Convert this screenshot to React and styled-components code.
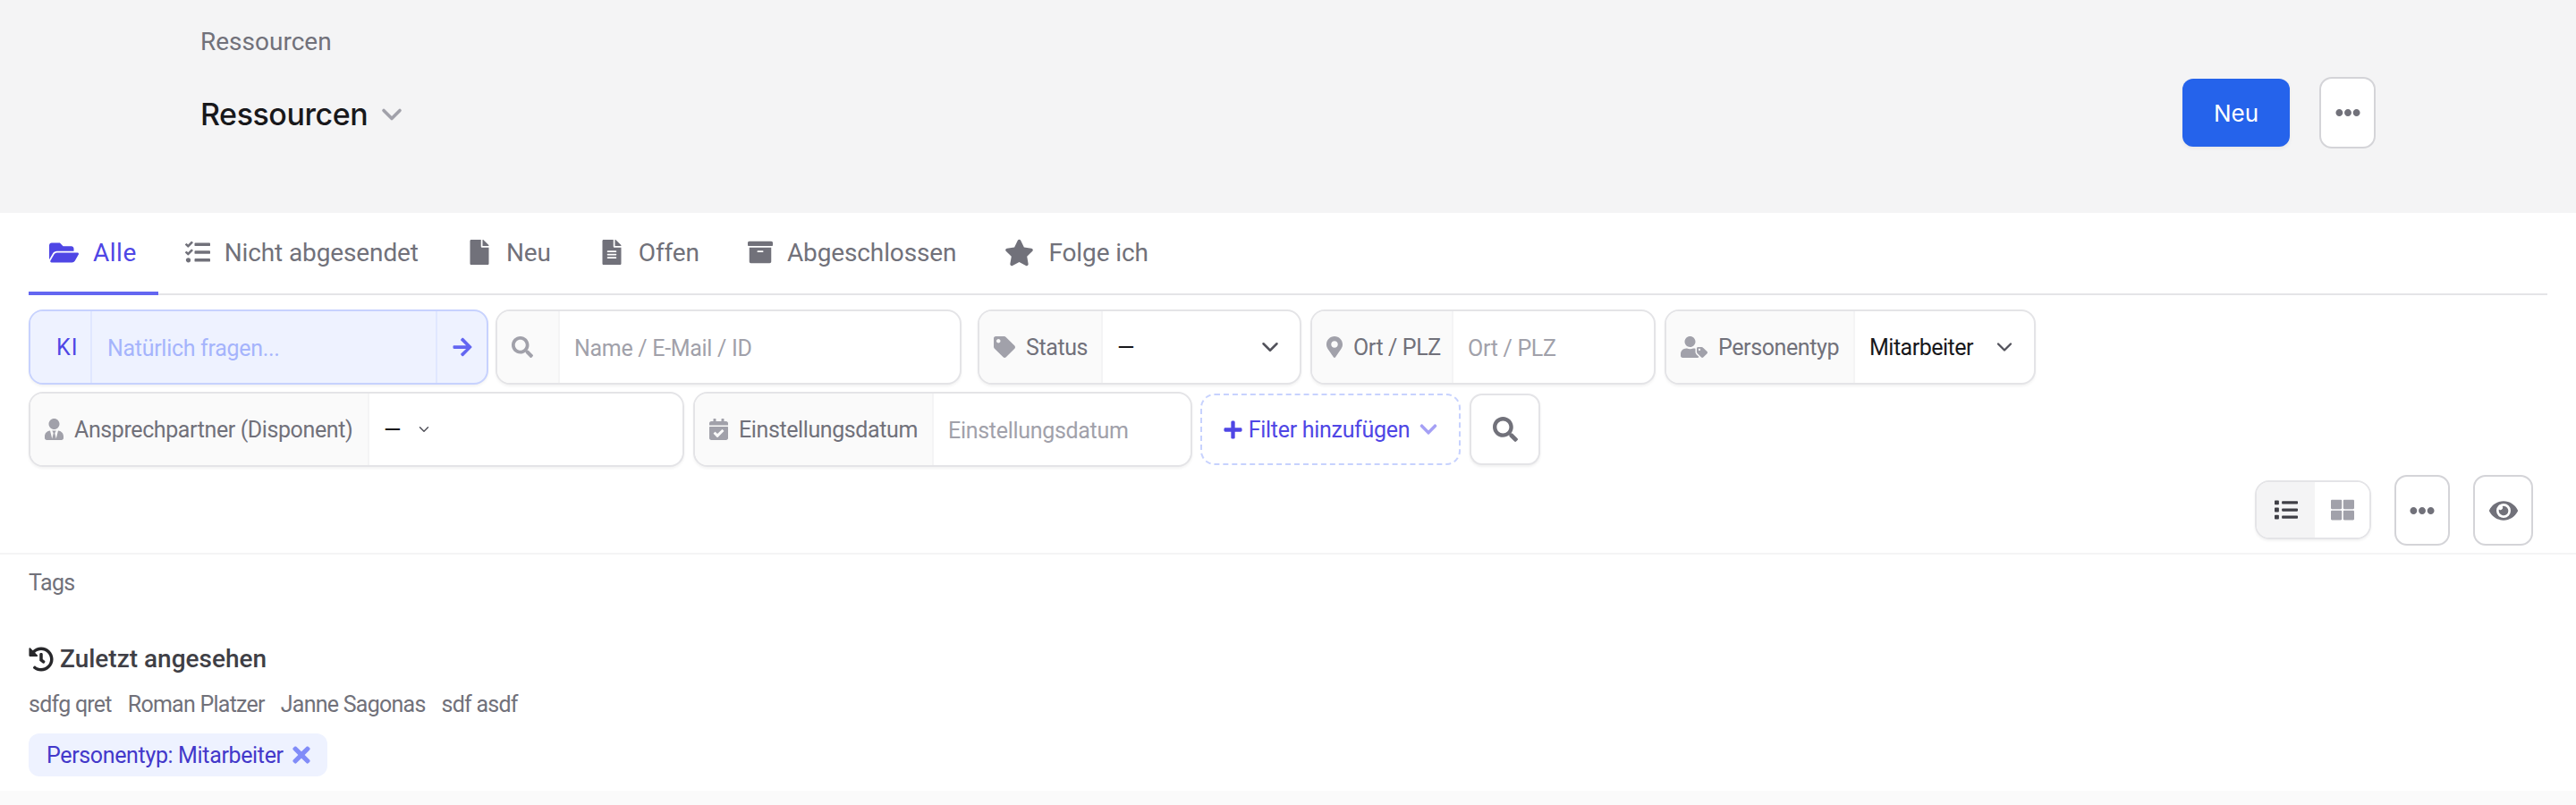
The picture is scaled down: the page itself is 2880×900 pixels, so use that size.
import styled, { createGlobalStyle } from "styled-components";
import {
  FaArchive,
  FaArrowRight,
  FaCalendarCheck,
  FaChevronDown,
  FaEllipsisH,
  FaEye,
  FaFile,
  FaFileAlt,
  FaFolderOpen,
  FaHistory,
  FaList,
  FaMapMarkerAlt,
  FaPlus,
  FaSearch,
  FaStar,
  FaTag,
  FaTasks,
  FaThLarge,
  FaTimes,
  FaUserTag,
  FaUserTie,
} from "react-icons/fa";
import { ChevronDown } from "lucide-react";

const GlobalStyle = createGlobalStyle`
  html, body {
    margin: 0;
    padding: 0;
    background: #fff;
  }
  body {
    font-family: "Roboto", "Liberation Sans", sans-serif;
    color: #71717a;
    overflow: hidden;
  }
`;

const Page = styled.div`
  width: 2880px;
  height: 900px;
  display: flex;
  flex-direction: column;
`;

const Header = styled.header`
  height: 238px;
  flex-shrink: 0;
  box-sizing: border-box;
  background: #f4f4f5;
  padding: 0 224px;
  display: flex;
  justify-content: space-between;
`;

const HeaderLeft = styled.div`
  display: flex;
  flex-direction: column;
  padding-top: 29px;
`;

const Breadcrumb = styled.div`
  font-size: 28px;
  line-height: 36px;
  color: #71717a;
`;

const TitleRow = styled.div`
  display: flex;
  align-items: center;
  gap: 9px;
  margin-top: 44px;
  height: 36px;

  svg {
    margin-top: 2px;
  }
`;

const Title = styled.h1`
  margin: 0;
  font-family: "Inter", "Liberation Sans", sans-serif;
  font-size: 34px;
  font-weight: 500;
  letter-spacing: -0.45px;
  color: #18181b;
`;

const HeaderActions = styled.div`
  display: flex;
  align-items: flex-start;
  gap: 33px;
  padding-top: 86px;
`;

const PrimaryButton = styled.button`
  width: 120px;
  height: 76px;
  margin-top: 2px;
  border: none;
  border-radius: 12px;
  background: #2563eb;
  color: #fff;
  font-family: "Inter", "Liberation Sans", sans-serif;
  font-size: 26px;
  box-shadow: 0 2px 4px rgba(0, 0, 0, 0.06);
`;

const IconButton = styled.button`
  width: ${(p) => p.$width || 63}px;
  height: ${(p) => p.$height || 79}px;
  padding: 0;
  box-sizing: border-box;
  display: flex;
  align-items: center;
  justify-content: center;
  background: #fff;
  border: 2px solid ${(p) => p.$border || "#d4d4d8"};
  border-radius: 14px;
  color: #71717a;
  box-shadow: ${(p) => (p.$raised ? "0 2px 3px rgba(0,0,0,.06)" : "none")};
`;

const TabBar = styled.nav`
  margin: 0 32px;
  height: 92px;
  box-sizing: border-box;
  border-bottom: 2px solid #e4e4e7;
  display: flex;
  gap: 7px;
  flex-shrink: 0;
`;

const Tab = styled.div`
  height: 92px;
  box-sizing: border-box;
  padding: 0 24px 0 23px;
  display: flex;
  align-items: center;
  gap: 16px;
  font-size: 28px;
  letter-spacing: ${(p) => (p.$active ? 0.5 : -0.12)}px;
  color: ${(p) => (p.$active ? "#4f46e5" : "#71717a")};
  border-bottom: 4px solid ${(p) => (p.$active ? "#6366f1" : "transparent")};

  svg {
    color: ${(p) => (p.$active ? "#4f46e5" : "#71717a")};
    flex-shrink: 0;
  }
`;

const Filters = styled.section`
  padding: 16px 32px 0;
  display: flex;
  flex-direction: column;
  gap: 8px;
`;

const FilterRow = styled.div`
  display: flex;
  align-items: center;
  gap: 10px;
`;

const FilterBox = styled.div`
  width: ${(p) => p.$width}px;
  margin-left: ${(p) => p.$offset || 0}px;
  height: 84px;
  box-sizing: border-box;
  display: flex;
  border: 2px solid ${(p) => (p.$ai ? "#c7d2fe" : "#e4e4e7")};
  border-radius: 16px;
  overflow: hidden;
  background: ${(p) => (p.$ai ? "#eef2ff" : "#fff")};
  box-shadow: 0 2px 3px rgba(0, 0, 0, 0.05);
  flex-shrink: 0;
`;

const FilterPrefix = styled.div`
  width: ${(p) => p.$width}px;
  box-sizing: border-box;
  flex-shrink: 0;
  display: flex;
  align-items: center;
  gap: 12px;
  padding-left: ${(p) => (p.$ai ? 29 : 16)}px;
  background: ${(p) => (p.$ai ? "#eef2ff" : "#fafafa")};
  border-right: 2px solid ${(p) => (p.$ai ? "#e0e7ff" : "#f4f4f5")};
  font-size: 25px;
  letter-spacing: ${(p) => (p.$ai ? 1 : -0.4)}px;
  color: ${(p) => (p.$ai ? "#4f46e5" : "#71717a")};
  white-space: nowrap;

  svg {
    width: ${(p) => p.$iconWidth || 24}px;
    color: #a1a1aa;
    flex-shrink: 0;
  }
`;

const Placeholder = styled.div`
  flex: 1;
  display: flex;
  align-items: center;
  padding: 2px 16px 0 ${(p) => (p.$ai ? 17 : 16)}px;
  font-size: 25px;
  letter-spacing: -0.3px;
  color: ${(p) => (p.$ai ? "#a5b4fc" : "#a1a1aa")};
  white-space: nowrap;
`;

const SelectValue = styled.div`
  flex: 1;
  display: flex;
  align-items: center;
  justify-content: ${(p) => (p.$tight ? "flex-start" : "space-between")};
  gap: ${(p) => (p.$tight ? 17 : 0)}px;
  padding: 0 ${(p) => p.$right || 18}px 0 16px;
  font-size: 25px;
  letter-spacing: -0.5px;
  color: #18181b;
  white-space: nowrap;

  svg {
    color: #52525b;
  }
`;

const AiSend = styled.div`
  width: 55px;
  flex-shrink: 0;
  display: flex;
  align-items: center;
  justify-content: center;
  border-left: 2px solid #e0e7ff;
  color: #6366f1;
`;

const AddFilter = styled.button`
  width: 291px;
  height: 80px;
  margin-left: -1px;
  box-sizing: border-box;
  display: flex;
  align-items: center;
  justify-content: center;
  gap: 6px;
  padding: 0;
  background: #fff;
  border: 2px dashed #c7d2fe;
  border-radius: 16px;
  font-family: inherit;
  font-size: 25px;
  letter-spacing: -0.3px;
  color: #4f46e5;
`;

const AddChevron = styled(FaChevronDown)`
  color: #a5a0f5;
  margin-left: 4px;
`;

const ViewBar = styled.div`
  margin-top: 9px;
  height: 89px;
  box-sizing: border-box;
  padding-right: 48px;
  border-bottom: 2px solid #f4f4f5;
  display: flex;
  justify-content: flex-end;
  gap: 26px;
`;

const ViewToggle = styled.div`
  width: 130px;
  height: 66px;
  margin-top: 6px;
  box-sizing: border-box;
  display: flex;
  border: 2px solid #e4e4e7;
  border-radius: 16px;
  overflow: hidden;
  box-shadow: 0 2px 3px rgba(0, 0, 0, 0.05);
`;

const ToggleItem = styled.div`
  flex: ${(p) => (p.$active ? "0 0 65px" : "1")};
  display: flex;
  align-items: center;
  justify-content: center;
  background: ${(p) => (p.$active ? "#f4f4f5" : "#fff")};
  color: ${(p) => (p.$active ? "#3f3f46" : "#a1a1aa")};
`;

const Content = styled.main`
  flex: 1;
  padding: 16px 32px 0;
  display: flex;
  flex-direction: column;
  align-items: flex-start;
`;

const TagsLabel = styled.div`
  font-size: 25px;
  letter-spacing: -0.6px;
  line-height: 32px;
  color: #71717a;
`;

const RecentTitle = styled.h2`
  margin: 51px 0 0;
  display: flex;
  align-items: center;
  gap: 7px;
  font-size: 28px;
  line-height: 36px;
  font-weight: 500;
  color: #3f3f46;
`;

const RecentList = styled.div`
  margin-top: 17px;
  display: flex;
  gap: 18px;
  font-size: 25px;
  letter-spacing: -0.75px;
  line-height: 32px;
  color: #71717a;
`;

const Chip = styled.div`
  margin-top: 16px;
  width: 334px;
  height: 48px;
  box-sizing: border-box;
  padding: 0 15px 0 20px;
  display: flex;
  align-items: center;
  justify-content: space-between;
  border-radius: 12px;
  background: #eef2ff;
  font-size: 25px;
  letter-spacing: -0.35px;
  white-space: nowrap;
  color: #4338ca;

  svg {
    color: #818cf8;
  }
`;

const BottomBand = styled.div`
  height: 16px;
  flex-shrink: 0;
  background: #fafafa;
`;

const App = () => {
  return (
    <Page>
      <GlobalStyle />
      <Header>
        <HeaderLeft>
          <Breadcrumb>Ressourcen</Breadcrumb>
          <TitleRow>
            <Title>Ressourcen</Title>
            <ChevronDown size={36} color="#a1a1aa" strokeWidth={2.4} />
          </TitleRow>
        </HeaderLeft>
        <HeaderActions>
          <PrimaryButton>Neu</PrimaryButton>
          <IconButton $width={63} $height={80}>
            <FaEllipsisH size={28} />
          </IconButton>
        </HeaderActions>
      </Header>

      <TabBar>
        <Tab $active>
          <FaFolderOpen size={33} />
          Alle
        </Tab>
        <Tab>
          <FaTasks size={28} />
          Nicht abgesendet
        </Tab>
        <Tab>
          <FaFile size={28} />
          Neu
        </Tab>
        <Tab>
          <FaFileAlt size={28} />
          Offen
        </Tab>
        <Tab>
          <FaArchive size={28} />
          Abgeschlossen
        </Tab>
        <Tab>
          <FaStar size={33} />
          Folge ich
        </Tab>
      </TabBar>

      <Filters>
        <FilterRow>
          <FilterBox $ai $width={514}>
            <FilterPrefix $ai $width={69}>
              KI
            </FilterPrefix>
            <Placeholder $ai>Natürlich fragen...</Placeholder>
            <AiSend>
              <FaArrowRight size={24} />
            </AiSend>
          </FilterBox>
          <FilterBox $width={521} $offset={-2}>
            <FilterPrefix $width={70}>
              <FaSearch size={24} />
            </FilterPrefix>
            <Placeholder>Name / E-Mail / ID</Placeholder>
          </FilterBox>
          <FilterBox $width={362} $offset={8}>
            <FilterPrefix $width={138}>
              <FaTag size={24} />
              Status
            </FilterPrefix>
            <SelectValue>
              —
              <ChevronDown size={30} strokeWidth={2} />
            </SelectValue>
          </FilterBox>
          <FilterBox $width={386}>
            <FilterPrefix $width={158} $iconWidth={18}>
              <FaMapMarkerAlt size={24} />
              Ort / PLZ
            </FilterPrefix>
            <Placeholder>Ort / PLZ</Placeholder>
          </FilterBox>
          <FilterBox $width={415}>
            <FilterPrefix $width={211} $iconWidth={30}>
              <FaUserTag size={24} />
              Personentyp
            </FilterPrefix>
            <SelectValue $right={19}>
              Mitarbeiter
              <ChevronDown size={28} strokeWidth={2} />
            </SelectValue>
          </FilterBox>
        </FilterRow>
        <FilterRow>
          <FilterBox $width={733}>
            <FilterPrefix $width={379} $iconWidth={21}>
              <FaUserTie size={24} />
              Ansprechpartner (Disponent)
            </FilterPrefix>
            <SelectValue $tight>
              —
              <ChevronDown size={18} strokeWidth={2} />
            </SelectValue>
          </FilterBox>
          <FilterBox $width={558}>
            <FilterPrefix $width={267} $iconWidth={21}>
              <FaCalendarCheck size={24} />
              Einstellungsdatum
            </FilterPrefix>
            <Placeholder>Einstellungsdatum</Placeholder>
          </FilterBox>
          <AddFilter>
            <FaPlus size={23} />
            Filter hinzufügen
            <AddChevron size={22} />
          </AddFilter>
          <IconButton $width={79} $height={80} $border="#e4e4e7" $raised>
            <FaSearch size={28} />
          </IconButton>
        </FilterRow>
      </Filters>

      <ViewBar>
        <ViewToggle>
          <ToggleItem $active>
            <FaList size={26} />
          </ToggleItem>
          <ToggleItem>
            <FaThLarge size={26} />
          </ToggleItem>
        </ViewToggle>
        <IconButton $width={62}>
          <FaEllipsisH size={28} />
        </IconButton>
        <IconButton $width={67}>
          <FaEye size={32} />
        </IconButton>
      </ViewBar>

      <Content>
        <TagsLabel>Tags</TagsLabel>
        <RecentTitle>
          <FaHistory size={28} color="#27272a" />
          Zuletzt angesehen
        </RecentTitle>
        <RecentList>
          <span>sdfg qret</span>
          <span>Roman Platzer</span>
          <span>Janne Sagonas</span>
          <span>sdf asdf</span>
        </RecentList>
        <Chip>
          Personentyp: Mitarbeiter
          <FaTimes size={28} />
        </Chip>
      </Content>
      <BottomBand />
    </Page>
  );
};

export default App;
